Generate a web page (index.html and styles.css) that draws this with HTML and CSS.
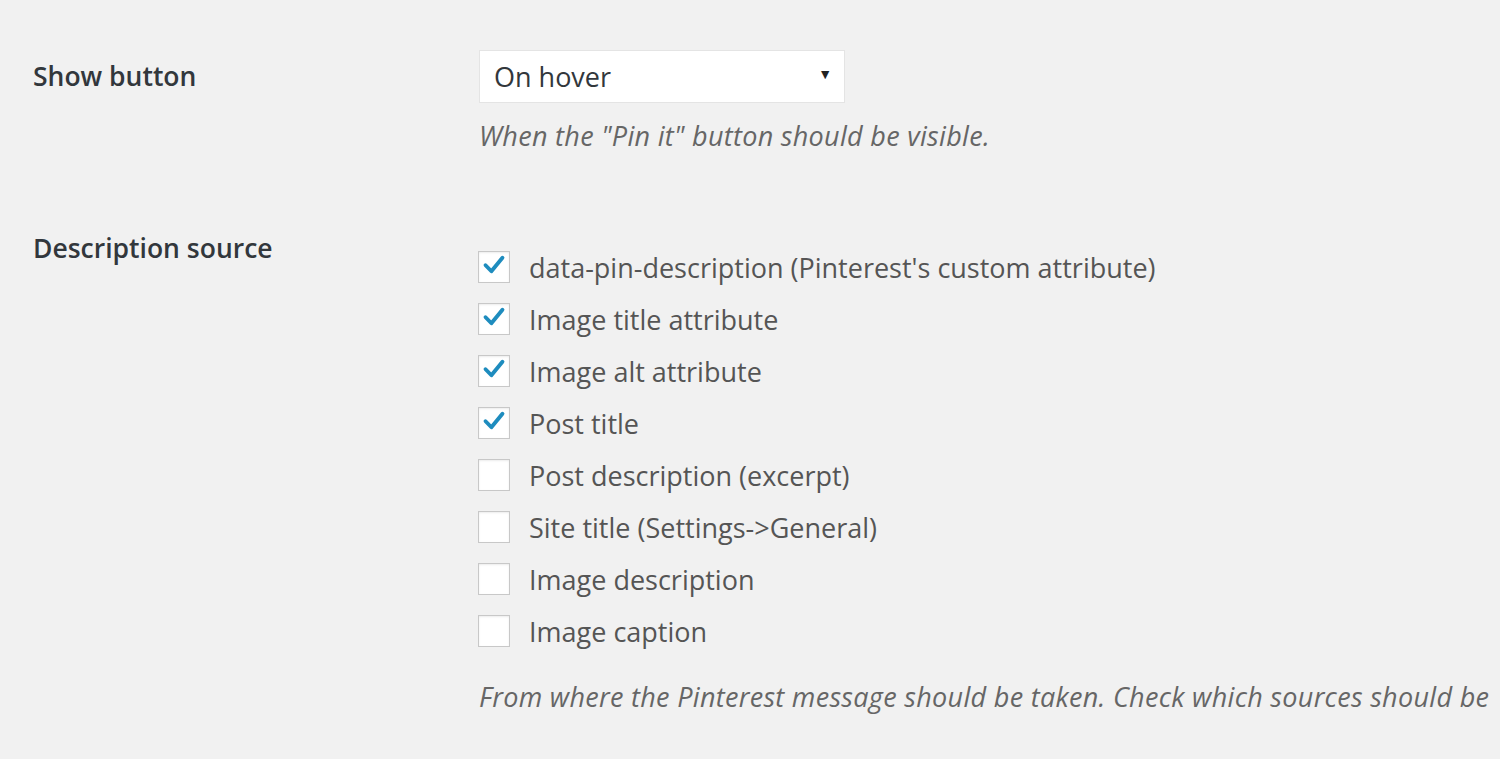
FILE: index.html
```html
<!DOCTYPE html>
<html>
<head>
<meta charset="utf-8">
<link rel="stylesheet" href="styles.css">
</head>
<body>
<div class="page">
  <div class="row row-first">
    <div class="th th-select">Show button</div>
    <div class="td">
      <div class="select"><span>On hover</span><span class="arrow">▼</span></div>
      <p class="desc desc-first">When the "Pin it" button should be visible.</p>
    </div>
  </div>
  <div class="row row-second">
    <div class="th">Description source</div>
    <div class="td">
      <ul class="checks">
        <li><span class="box checked"><svg viewBox="0 0 20 20"><path d="M3.5 10.2 L8 14.8 L16.5 4.5"/></svg></span>data-pin-description (Pinterest's custom attribute)</li>
        <li><span class="box checked"><svg viewBox="0 0 20 20"><path d="M3.5 10.2 L8 14.8 L16.5 4.5"/></svg></span>Image title attribute</li>
        <li><span class="box checked"><svg viewBox="0 0 20 20"><path d="M3.5 10.2 L8 14.8 L16.5 4.5"/></svg></span>Image alt attribute</li>
        <li><span class="box checked"><svg viewBox="0 0 20 20"><path d="M3.5 10.2 L8 14.8 L16.5 4.5"/></svg></span>Post title</li>
        <li><span class="box"></span>Post description (excerpt)</li>
        <li><span class="box"></span>Site title (Settings-&gt;General)</li>
        <li><span class="box"></span>Image description</li>
        <li><span class="box"></span>Image caption</li>
      </ul>
      <p class="desc desc-last">From where the Pinterest message should be taken. Check which sources should be</p>
    </div>
  </div>
</div>
</body>
</html>
```

FILE: styles.css
```css
html, body {
  margin: 0;
  padding: 0;
  background: #f1f1f1;
  overflow: hidden;
}
.page {
  padding: 50px 0 0 33px;
  font-family: "Open Sans", "Noto Sans", sans-serif;
  font-size: 27px;
  color: #444;
  width: 1467px;
  overflow: hidden;
}
.row {
  display: grid;
  grid-template-columns: 446px 1fr;
}
.row-second {
  margin-top: 78px;
}
.th {
  font-weight: 600;
  color: #32373c;
  line-height: 34px;
  font-size: 26.5px;
}
.th-select {
  line-height: 53px;
}
.td {
  min-width: 0;
}
.select {
  width: 366px;
  height: 53px;
  box-sizing: border-box;
  background: #fff;
  border: 1px solid #e4e4e4;
  display: flex;
  align-items: center;
  justify-content: space-between;
  padding: 0 12px 0 14px;
  color: #32373c;
}
.arrow {
  font-size: 14px;
  color: #222;
  margin-top: -6px;
}
.desc {
  margin: 0;
  font-style: italic;
  color: #666;
  line-height: 34px;
  white-space: nowrap;
  font-size: 27px;
  letter-spacing: 0.3px;
}
.desc-first {
  margin-top: 16px;
}
.desc-last {
  margin-top: 23px;
}
.checks {
  list-style: none;
  margin: 0;
  padding: 10px 0 0 0;
}
.checks li {
  display: flex;
  align-items: center;
  height: 52px;
  color: #555;
}
.box {
  width: 32px;
  height: 32px;
  box-sizing: border-box;
  border: 1px solid #c8c8c8;
  background: #fff;
  box-shadow: inset 0 1px 2px rgba(0,0,0,0.08);
  margin: 0 19px 0 -1px;
  flex: none;
  display: flex;
  align-items: center;
  justify-content: center;
}
.box svg {
  width: 26px;
  height: 26px;
  margin-top: -4px;
}
.box svg path {
  fill: none;
  stroke: #1e8cbe;
  stroke-width: 3;
  stroke-linecap: round;
  stroke-linejoin: round;
}
```
